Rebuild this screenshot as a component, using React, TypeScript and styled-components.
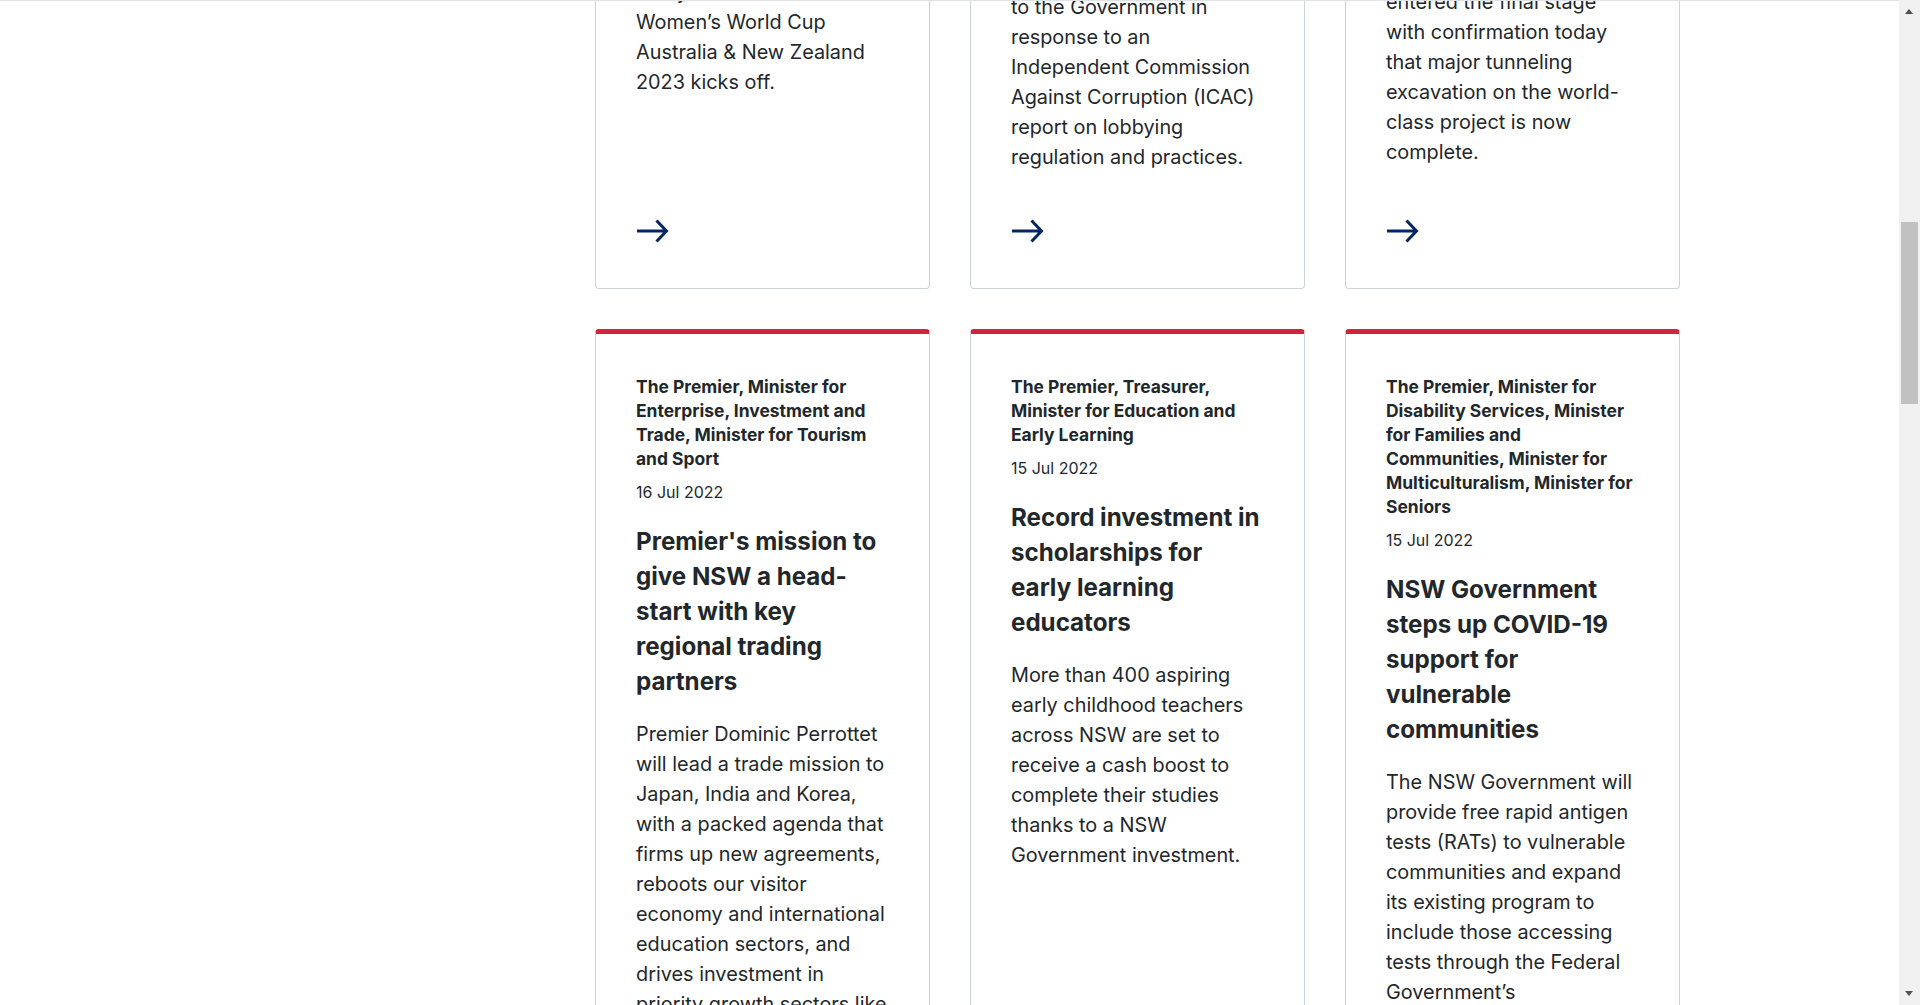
import React, { useLayoutEffect, useRef } from "react";
import styled, { createGlobalStyle } from "styled-components";

const FONT = `Inter, "Liberation Sans", Arial, sans-serif`;

const GlobalStyle = createGlobalStyle`
  * { box-sizing: border-box; }
  html { scrollbar-width: none; }
  html::-webkit-scrollbar { display: none; }
  body {
    margin: 0;
    background: #ffffff;
    color: #22272b;
    font-family: ${FONT};
  }
`;

type Story = {
  authors: string;
  date: string;
  title: string;
  summary: string;
};

const stories: Story[] = [
  {
    authors: "The Premier",
    date: "18 Jul 2022",
    title: "One year to go",
    summary:
      "Sydney will host the opening match and the final, with football fans across NSW urged to get behind the Matildas as celebrations begin to mark one year until the FIFA Women’s World Cup Australia & New Zealand 2023 kicks off.",
  },
  {
    authors: "The Premier",
    date: "17 Jul 2022",
    title: "Lobbying reforms to boost integrity and public trust in government",
    summary:
      "The NSW Government will adopt every recommendation delivered to the Government in response to an Independent Commission Against Corruption (ICAC) report on lobbying regulation and practices.",
  },
  {
    authors: "The Premier",
    date: "17 Jul 2022",
    title: "Major tunnelling complete on Rozelle Interchange",
    summary:
      "The Rozelle Interchange, one of the most complex underground road projects ever built in Australia, has entered the final stage with confirmation today that major tunneling excavation on the world-class project is now complete.",
  },
  {
    authors:
      "The Premier, Minister for Enterprise, Investment and Trade, Minister for Tourism and Sport",
    date: "16 Jul 2022",
    title:
      "Premier's mission to give NSW a head-start with key regional trading partners",
    summary:
      "Premier Dominic Perrottet will lead a trade mission to Japan, India and Korea, with a packed agenda that firms up new agreements, reboots our visitor economy and international education sectors, and drives investment in priority growth sectors like renewable energy and advanced manufacturing.",
  },
  {
    authors:
      "The Premier, Treasurer, Minister for Education and Early Learning",
    date: "15 Jul 2022",
    title: "Record investment in scholarships for early learning educators",
    summary:
      "More than 400 aspiring early childhood teachers across NSW are set to receive a cash boost to complete their studies thanks to a NSW Government investment.",
  },
  {
    authors:
      "The Premier, Minister for Disability Services, Minister for Families and Communities, Minister for Multiculturalism, Minister for Seniors",
    date: "15 Jul 2022",
    title:
      "NSW Government steps up COVID-19 support for vulnerable communities",
    summary:
      "The NSW Government will provide free rapid antigen tests (RATs) to vulnerable communities and expand its existing program to include those accessing tests through the Federal Government’s concessional access program.",
  },
  {
    authors: "Minister for Regional Transport and Roads",
    date: "14 Jul 2022",
    title: "New bridge opens for regional motorists",
    summary:
      "Motorists in the state’s north will enjoy safer and more reliable journeys with the new bridge now open to traffic.",
  },
  {
    authors: "Minister for Health",
    date: "14 Jul 2022",
    title: "Winter health boost for hospitals",
    summary:
      "Extra staff and beds will support hospitals across NSW through the busy winter months.",
  },
  {
    authors: "Minister for Environment",
    date: "13 Jul 2022",
    title: "National parks to grow",
    summary:
      "Thousands of hectares of high conservation land will be added to the national parks estate.",
  },
];

const Page = styled.div`
  min-height: 5318px;
  padding-right: 21px;
  display: flex;
  flex-direction: column;
`;

const TopRule = styled.div`
  position: fixed;
  top: 0;
  left: 0;
  right: 21px;
  height: 1px;
  background: #dfe3e8;
  z-index: 5;
`;

const Masthead = styled.header`
  display: flex;
  align-items: center;
  height: 96px;
  padding: 0 219px;
  border-bottom: 1px solid #dfe3e8;
  font-size: 18px;
  font-weight: 700;
  color: #002664;
`;

const Hero = styled.section`
  width: 1461px;
  margin: 0 auto;
  padding: 48px 0 40px;
`;

const HeroTitle = styled.h1`
  margin: 0 0 16px;
  font-size: 48px;
  line-height: 60px;
  color: #002664;
`;

const HeroText = styled.p`
  margin: 0;
  font-size: 20px;
  line-height: 30px;
`;

const Layout = styled.main`
  display: flex;
  gap: 40px;
  width: 1461px;
  margin: 0 auto;
  padding-bottom: 96px;
`;

const Filters = styled.aside`
  flex: 0 0 336px;
`;

const FilterHeading = styled.h2`
  margin: 0 0 16px;
  font-size: 20px;
  line-height: 30px;
`;

const FilterItem = styled.label`
  display: block;
  font-size: 16px;
  line-height: 32px;
`;

const CardGrid = styled.div`
  display: grid;
  grid-template-columns: repeat(3, 335px);
  gap: 40px;
`;

const CardBox = styled.article`
  display: flex;
  flex-direction: column;
  background: #ffffff;
  border: 1px solid #cdd3d6;
  border-top: 5px solid #d2243f;
  border-radius: 4px;
  padding: 41px 40px 41px;
`;

const Authors = styled.p`
  margin: 0;
  font-size: 17.45px;
  font-weight: 700;
  line-height: 24px;
`;

const Published = styled.p`
  margin: 8px 0 0;
  font-size: 16px;
  line-height: 26px;
`;

const Title = styled.h3`
  margin: 19px 0 20px;
  font-size: 24.15px;
  font-weight: 700;
  line-height: 35px;
`;

const Summary = styled.p`
  margin: 0;
  font-size: 19.85px;
  line-height: 30px;
`;

const More = styled.a`
  display: flex;
  margin-top: auto;
  padding-top: 43px;
  color: #002664;
`;

const Footer = styled.footer`
  margin-top: auto;
  background: #002664;
  color: #ffffff;
  padding: 48px 219px;
  font-size: 16px;
`;

const ScrollTrack = styled.div`
  position: fixed;
  top: 0;
  right: 0;
  bottom: 0;
  width: 21px;
  background: #f1f1f1;
  z-index: 6;
`;

const ScrollThumb = styled.div`
  position: absolute;
  left: 2px;
  right: 2px;
  top: 222px;
  height: 182px;
  background: #c1c1c1;
`;

const ScrollArrow = styled.span<{ $dir: "up" | "down" }>`
  position: absolute;
  left: 6px;
  width: 0;
  height: 0;
  border-left: 4.5px solid transparent;
  border-right: 4.5px solid transparent;
  ${({ $dir }) =>
    $dir === "up"
      ? "top: 9px; border-bottom: 5px solid #505050;"
      : "bottom: 9px; border-top: 5px solid #505050;"}
`;

const ArrowIcon = () => (
  <svg width="32" height="32" viewBox="0 0 32 32" fill="none" style={{ overflow: "visible" }}>
    <path d="M1 16H30M20.5 5.5L30.5 16L20.5 26.5" stroke="currentColor" strokeWidth="3" />
  </svg>
);

const NewsCard = ({
  story,
  anchorRef,
}: {
  story: Story;
  anchorRef?: React.Ref<HTMLElement>;
}) => (
  <CardBox ref={anchorRef}>
    <Authors>{story.authors}</Authors>
    <Published>{story.date}</Published>
    <Title>{story.title}</Title>
    <Summary>{story.summary}</Summary>
    <More href="#" aria-label={story.title}>
      <ArrowIcon />
    </More>
  </CardBox>
);

const App = () => {
  const anchorRef = useRef<HTMLElement | null>(null);

  // open the listing scrolled to the second row of media releases
  useLayoutEffect(() => {
    const place = () => {
      const el = anchorRef.current;
      if (!el) return;
      const y = el.getBoundingClientRect().top + window.scrollY - 329;
      window.scrollTo(0, y);
    };
    place();
    document.fonts?.ready.then(place);
  }, []);

  return (
    <Page>
      <GlobalStyle />
      <TopRule />
      <Masthead>NSW Government</Masthead>
      <Hero>
        <HeroTitle>News</HeroTitle>
        <HeroText>The latest media releases from across the NSW Government.</HeroText>
      </Hero>
      <Layout>
        <Filters>
          <FilterHeading>Filter results</FilterHeading>
          <FilterItem>All ministers</FilterItem>
          <FilterItem>All topics</FilterItem>
        </Filters>
        <CardGrid>
          {stories.map((story, i) => (
            <NewsCard
              key={story.title}
              story={story}
              anchorRef={i === 3 ? anchorRef : undefined}
            />
          ))}
        </CardGrid>
      </Layout>
      <Footer>© State of New South Wales</Footer>
      <ScrollTrack>
        <ScrollArrow $dir="up" />
        <ScrollThumb />
        <ScrollArrow $dir="down" />
      </ScrollTrack>
    </Page>
  );
};

export default App;
